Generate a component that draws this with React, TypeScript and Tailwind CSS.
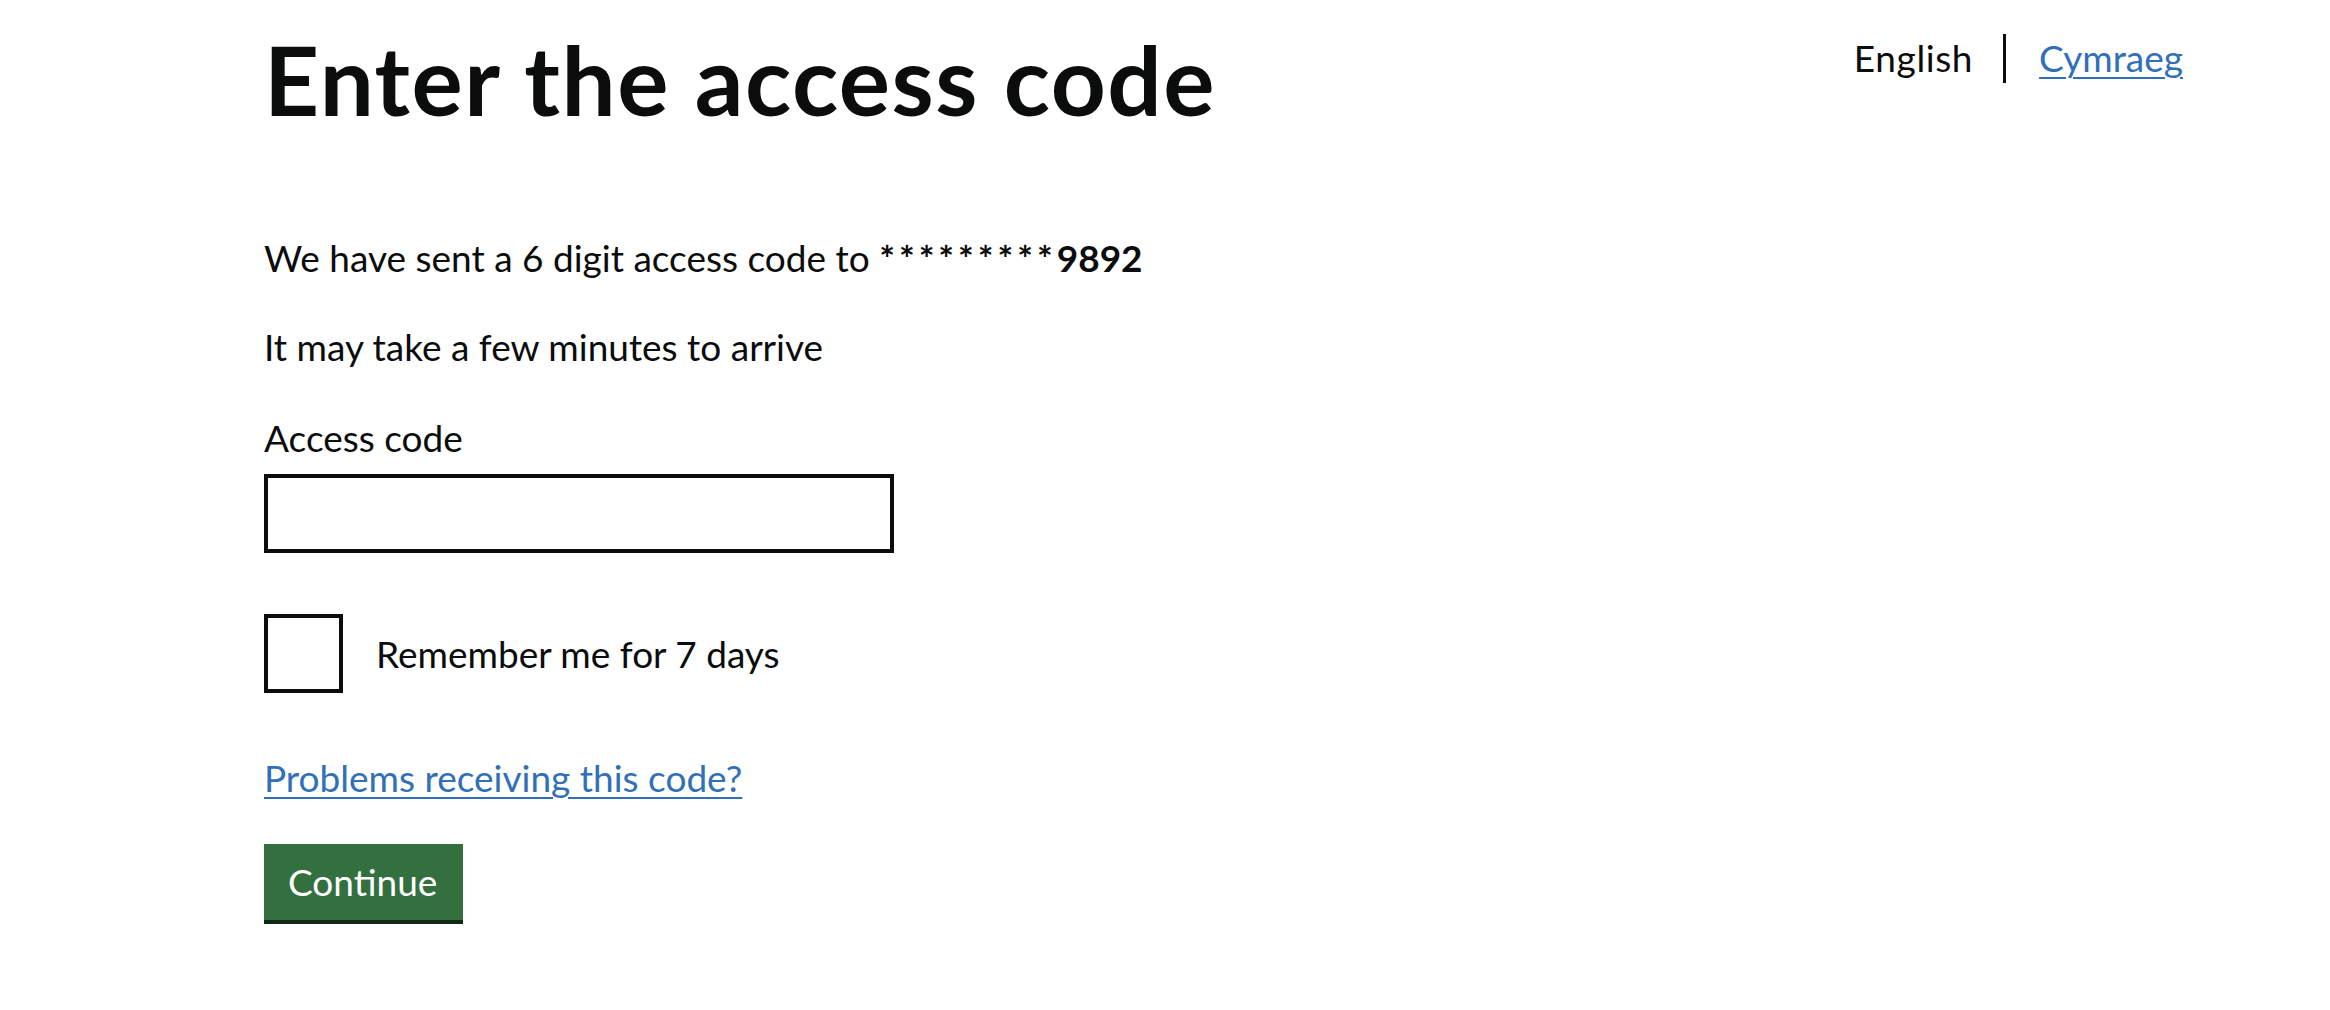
export default function App() {
  return (
    <div className="min-h-screen w-full bg-white text-[#0b0c0c] font-[family-name:Lato,sans-serif]">
      <div className="pl-[264px] pr-[147px]">
        <div className="flex items-start justify-between">
          <h1 className="mt-[29px] text-[96px] font-bold leading-[100px] tracking-[1.5px]">
            Enter the access code
          </h1>
          <div className="mt-[33px] flex h-[50px] items-center text-[37px] leading-[50px]">
            <span className="tracking-[0.6px]">English</span>
            <span className="ml-[30px] mr-[33px] h-[49px] w-[3px] bg-[#0b0c0c]" />
            <a href="#" className="text-[#3170b8] underline decoration-[2px] underline-offset-[5px]">
              Cymraeg
            </a>
          </div>
        </div>

        <p className="mt-[104px] h-[50px] text-[37px] leading-[50px]">
          We have sent a 6 digit access code to{" "}
          <strong className="font-bold">
            <span className="tracking-[4px]">*********</span>9892
          </strong>
        </p>
        <p className="mt-[39px] text-[37px] leading-[50px]">It may take a few minutes to arrive</p>

        <label className="mt-[41px] block text-[37px] leading-[50px]">Access code</label>
        <input
          type="text"
          className="mt-[11px] block h-[79px] w-[630px] border-[4px] border-[#0b0c0c] bg-white outline-none"
        />

        <div className="mt-[61px] flex items-center">
          <div className="h-[79px] w-[79px] border-[4px] border-[#0b0c0c] bg-white" />
          <span className="ml-[33px] text-[37px] leading-[50px]">Remember me for 7 days</span>
        </div>

        <div className="mt-[60px]">
          <a href="#" className="text-[37px] leading-[50px] text-[#3170b8] underline decoration-[2px] underline-offset-[5px]">
            Problems receiving this code?
          </a>
        </div>

        <button className="mt-[41px] flex h-[76px] w-[199px] items-center bg-[#34703f] pl-[24px] text-[37px] leading-[50px] text-white shadow-[0_4px_0_#102a16]">
          Continue
        </button>
      </div>
    </div>
  );
}
